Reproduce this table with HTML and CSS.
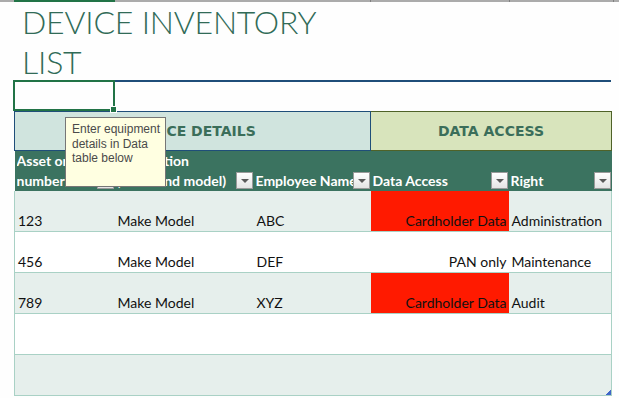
FILE: index.html
```html
<!DOCTYPE html>
<html>
<head>
    <meta charset="UTF-8">
    <title>Device Inventory List</title>
    <link rel="stylesheet" href="styles.css">
</head>
<body>
    <div class="colbar">
        <span class="seg seg-a"></span>
        <span class="seg seg-sel"></span>
        <span class="seg seg-c"></span>
        <span class="seg seg-d tick"></span>
        <span class="seg seg-e tick"></span>
        <span class="seg seg-f tick"></span>
    </div>

    <h1 class="title">DEVICE INVENTORY<br>LIST</h1>

    <div class="selrow">
        <div class="selcell"><span class="handle"></span></div>
        <div class="selline"></div>
    </div>

    <div class="sheet">
        <table class="inventory">
            <colgroup>
                <col class="c-asset">
                <col class="c-desc">
                <col class="c-emp">
                <col class="c-data">
                <col class="c-right">
            </colgroup>
            <tr class="section">
                <th colspan="3" class="sec-device">DEVICE DETAILS</th>
                <th colspan="2" class="sec-access">DATA ACCESS</th>
            </tr>
            <tr class="head">
                <th><div class="hcell"><span class="hlabel">Asset or<br>number</span><span class="filter"></span></div></th>
                <th><div class="hcell"><span class="hlabel">Description<br>(make and model)</span><span class="filter"></span></div></th>
                <th><div class="hcell"><span class="hlabel">Employee Name</span><span class="filter"></span></div></th>
                <th><div class="hcell"><span class="hlabel">Data Access</span><span class="filter"></span></div></th>
                <th><div class="hcell"><span class="hlabel">Right</span><span class="filter"></span></div></th>
            </tr>
            <tr class="band">
                <td>123</td>
                <td>Make Model</td>
                <td>ABC</td>
                <td class="num alert">Cardholder Data</td>
                <td>Administration</td>
            </tr>
            <tr>
                <td>456</td>
                <td>Make Model</td>
                <td>DEF</td>
                <td class="num">PAN only</td>
                <td>Maintenance</td>
            </tr>
            <tr class="band">
                <td>789</td>
                <td>Make Model</td>
                <td>XYZ</td>
                <td class="num alert">Cardholder Data</td>
                <td>Audit</td>
            </tr>
            <tr>
                <td></td><td></td><td></td><td></td><td></td>
            </tr>
            <tr class="band">
                <td></td><td></td><td></td><td></td><td></td>
            </tr>
        </table>
        <span class="resize"></span>

        <div class="tooltip">Enter equipment details in Data table below</div>
    </div>
</body>
</html>
```

FILE: styles.css
```css
body {
    margin: 0;
    background-color: #fefefe;
    font-family: "Lato", "Liberation Sans", sans-serif;
    width: 619px;
    overflow: hidden;
}

/* column header strip at the very top */
.colbar {
    display: flex;
    height: 2px;
}
.seg {
    height: 2px;
    background-color: #ababab;
}
.seg-a { width: 14px; }
.seg-sel { width: 101px; background-color: #217346; }
.seg-c { width: 255px; }
.seg-d { width: 138px; }
.seg-e { width: 103px; }
.seg-f { flex: 1; }
.tick {
    border-left: 1px solid #7f7f7f;
}

.title {
    margin: 0 0 -2px 0;
    padding-left: 22px;
    font-family: "Lato", "Liberation Sans", sans-serif;
    font-weight: 300;
    font-size: 32px;
    line-height: 40px;
    letter-spacing: -0.2px;
    color: #316b57;
}

/* selected cell + thick border line */
.selrow {
    display: flex;
    height: 31px;
    padding-left: 13px;
}
.selcell {
    position: relative;
    width: 102px;
    box-sizing: border-box;
    border: 2px solid #217346;
}
.handle {
    position: absolute;
    right: -4px;
    bottom: -4px;
    width: 5px;
    height: 5px;
    background-color: #217346;
    border: 1px solid #fff;
    z-index: 2;
}
.selline {
    width: 496px;
    border-top: 2px solid #1f4e79;
}

.sheet {
    position: relative;
    padding-left: 14px;
}

.inventory {
    width: 597px;
    table-layout: fixed;
    border-collapse: collapse;
    font-size: 14px;
    color: #111;
}
.c-asset { width: 100px; }
.c-desc { width: 139px; }
.c-emp { width: 117px; }
.c-data { width: 138px; }
.c-right { width: 103px; }

.section th {
    height: 38px;
    padding: 0;
    font-family: "DejaVu Sans", sans-serif;
    font-weight: bold;
    font-size: 14px;
    color: #3b6e5a;
    text-align: center;
}
.sec-device {
    background-color: #d0e4de;
    border: 1px solid #1f4e79;
}
.sec-access {
    background-color: #d8e4bc;
    border: 1px solid #4f6228;
}

.head th {
    height: 40px;
    padding: 0 0 0 2px;
    background-color: #3b7360;
    color: #fff;
    font-weight: bold;
    text-align: left;
    vertical-align: bottom;
}
.hcell {
    display: flex;
    align-items: flex-end;
    line-height: 20px;
}
.hlabel {
    flex: 1;
    overflow: hidden;
    white-space: nowrap;
}
.filter {
    flex: none;
    position: relative;
    width: 15px;
    height: 15px;
    margin: 0 1px 2px 0;
    border: 1px solid #9a9a9a;
    background: linear-gradient(#ffffff, #e4e4e4);
}
.filter::after {
    content: "";
    position: absolute;
    left: 4px;
    top: 6px;
    border-left: 4px solid transparent;
    border-right: 4px solid transparent;
    border-top: 4px solid #5a5a5a;
}

.inventory td {
    height: 38px;
    padding: 0 3px 2px 3px;
    line-height: 17px;
    vertical-align: bottom;
    white-space: nowrap;
    overflow: hidden;
    background-color: #ffffff;
    border-bottom: 1px solid #a9d1c5;
}
.inventory td:first-child {
    border-left: 1px solid #a9d1c5;
}
.inventory td:last-child {
    border-right: 1px solid #a9d1c5;
}
.inventory .band td {
    background-color: #e6efec;
}
.inventory td.num {
    text-align: right;
    padding-right: 2px;
}
.inventory .band td.alert,
.inventory td.alert {
    background-color: #ff1a00;
}

.resize {
    position: absolute;
    left: 606px;
    bottom: 1px;
    width: 5px;
    height: 5px;
    background: linear-gradient(135deg, transparent 50%, #3f66c8 50%);
}

.tooltip {
    position: absolute;
    left: 65px;
    top: 6px;
    width: 101px;
    height: 70px;
    box-sizing: border-box;
    padding: 4px 0 0 6px;
    background-color: #ffffe1;
    border: 1px solid #767676;
    font-family: "Liberation Sans", sans-serif;
    font-size: 12px;
    line-height: 14.5px;
    color: #4a4a4a;
    z-index: 3;
}
```
